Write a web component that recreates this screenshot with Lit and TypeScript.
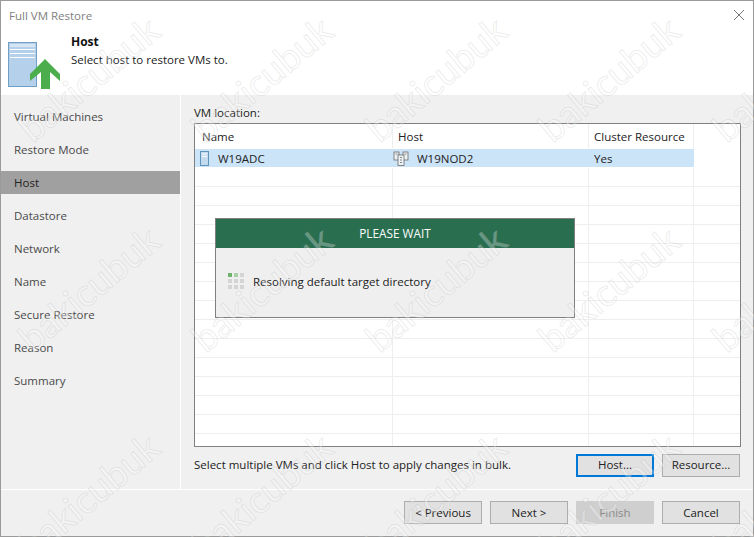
import { LitElement, html, css } from "lit";
import { customElement } from "lit/decorators.js";

const STEPS = ["Virtual Machines", "Restore Mode", "Host", "Datastore", "Network", "Name", "Secure Restore", "Reason", "Summary"];
const MARKS: [number, number][] = [];
for (const y of [78, 288, 495]) {
  for (let i = 1; i < 6; i++) MARKS.push([-86 + i * 173.5, y]);
}

@customElement("app-root")
export class AppRoot extends LitElement {
  static styles = css`
    :host { display: block; width: 754px; height: 537px; position: relative; overflow: hidden; background: #fff;
      font-family: "Open Sans", "Noto Sans", sans-serif; font-size: 11.5px; color: #222; }
    .window { box-sizing: border-box; height: 537px; border: 1px solid #9a9a9a; display: flex; flex-direction: column; }
    .title { height: 28px; display: flex; align-items: center; justify-content: space-between; padding: 0 6px 0 8px; color: #808080; font-size: 11.5px; flex: none; }
    .close { width: 12px; height: 12px; margin-right: 2px; margin-top: -1px; }
    .banner { height: 66px; flex: none; display: flex; background: #fff; }
    .banner-icon { width: 70px; padding: 13px 0 0 6px; box-sizing: border-box; flex: none; }
    .banner-icon svg { display: block; }
    .banner-text { padding-top: 4px; line-height: 18px; }
    .banner-text b { display: block; font-weight: 700; color: #111; font-size: 12px; }
    .main { flex: 1; display: flex; background: #f0f0f0; min-height: 0; }
    .side { width: 179px; flex: none; border-right: 1px solid #fff; padding-top: 10px; }
    .step { height: 23px; margin-bottom: 10px; display: flex; align-items: center; padding-left: 13px; color: #4a4a4a; }
    .step.on { background: #a0a0a0; color: #222; }
    .content { flex: 1; padding: 10px 12px 0 13px; display: flex; flex-direction: column; min-width: 0; }
    .label { height: 18px; line-height: 16px; }
    .table { position: relative; height: 324px; box-sizing: border-box; border: 1px solid #808080; background: #fff; overflow: hidden; flex: none; }
    .rows { display: flex; flex-direction: column; }
    .row { display: grid; grid-template-columns: 198px 196px 105px; height: 19px; box-sizing: border-box; border-bottom: 1px solid #eeeeee; }
    .row > div { border-right: 1px solid #eeeeee; display: flex; align-items: center; box-sizing: border-box; padding-left: 7px; }
    .row.head { height: 25px; padding-bottom: 1px; border-bottom: none; }
    .row.head > div:nth-child(2) { padding-left: 5px; }
    .row.head > div:nth-child(3) { padding-left: 5px; }
    .row.sel { height: 18px; border-bottom: none; margin-bottom: 1px; }
    .row.sel > div { background: #cce4f8; border-right-color: #cce4f8; color: #222; }
    .row.sel .c1 { padding-left: 5px; gap: 7px; }
    .row.sel .c2 { padding-left: 0; gap: 8px; }
    .row.sel .c3 { padding-left: 5px; }
    .dialog { position: absolute; left: 20px; top: 94px; width: 360px; height: 100px; box-sizing: border-box; border: 1px solid #808080; background: #efefef; display: flex; flex-direction: column; }
    .dialog-head { height: 29px; padding-bottom: 2px; box-sizing: border-box; background: #2a6e50; color: #fff; display: flex; align-items: center; justify-content: center; flex: none; font-size: 11.8px; }
    .dialog-body { flex: 1; display: flex; align-items: center; gap: 9px; padding: 0 12px 2px; }
    .spin { display: grid; grid-template-columns: repeat(3, 4px); grid-auto-rows: 4px; gap: 2px; margin-top: -1px; }
    .spin i { background: #d4d4d4; }
    .spin i.g { background: #6db36d; }
    .spin i.g2 { background: #a9cfa9; }
    .bulk { flex: 1; display: flex; align-items: center; justify-content: space-between; min-height: 0; padding-top: 7px; padding-bottom: 13px; }
    .bulk span { margin-bottom: 1px; }
    .btns { display: flex; gap: 8px; margin-right: 1px; }
    button { width: 78px; height: 23px; box-sizing: border-box; border: 1px solid #adadad; background: #e1e1e1; font: inherit; color: #222; padding: 0 0 1px; }
    button.focus { border: 2px solid #0078d7; }
    button:disabled { background: #cfcfcf; border-color: #cfcfcf; color: #8a8a8a; }
    .foot { height: 47px; flex: none; box-sizing: border-box; border-top: 1px solid #fff; background: #f0f0f0; display: flex; justify-content: flex-end; align-items: flex-start; padding: 11px 13px 0 0; gap: 8px; }
    .marks { position: absolute; inset: 0; pointer-events: none; }
    .mark { position: absolute; font-family: "Lato", "Open Sans", sans-serif; font-size: 38px; line-height: 1; white-space: nowrap; color: rgba(255,255,255,.30);
      -webkit-text-stroke: 1px rgba(170,170,170,.22); transform: translate(-50%,-50%) rotate(-40deg); }
  `;

  render() {
    return html`
      <div class="window">
        <div class="title"><span>Full VM Restore</span>
          <svg class="close" viewBox="0 0 12 12"><path d="M1 1l10 10M11 1L1 11" stroke="#777" stroke-width="1" fill="none"/></svg>
        </div>
        <div class="banner">
          <div class="banner-icon">
            <svg width="54" height="47" viewBox="0 0 54 47">
              <rect x="1.5" y="0.5" width="28" height="44" fill="#b5d0ea" stroke="#6f9fc4"/>
              <rect x="3" y="2" width="25" height="3" fill="#d6e5f3"/>
              <path d="M3 7.5h25M3 11.5h25M3 15.5h25" stroke="#fff" stroke-width="1.2"/>
              <path d="M38 17L53 32v7l-10-9v17H34V30L23 39v-7z" fill="#4cad4c"/>
            </svg>
          </div>
          <div class="banner-text"><b>Host</b>Select host to restore VMs to.</div>
        </div>
        <div class="main">
          <div class="side">
            ${STEPS.map((s) => html`<div class="step ${s === "Host" ? "on" : ""}">${s}</div>`)}
          </div>
          <div class="content">
            <div class="label">VM location:</div>
            <div class="table">
              <div class="rows">
                <div class="row head"><div>Name</div><div>Host</div><div>Cluster Resource</div></div>
                <div class="row sel">
                  <div class="c1">
                    <svg width="11" height="15" viewBox="0 0 11 15"><rect x=".5" y=".5" width="8" height="14" fill="#c4dbef" stroke="#5f94bb"/><path d="M2 3h5M2 5.500h5" stroke="#fff"/></svg>
                    W19ADC
                  </div>
                  <div class="c2">
                    <svg width="16" height="15" viewBox="0 0 16 15" fill="#eef3f6" stroke="#6a6a6a" stroke-width=".8"><rect x="1" y="1" width="5" height="8"/><rect x="10" y="1" width="5" height="8"/><rect x="5" y="4" width="6" height="10.500"/><path d="M7 6.500h2M7 9h2M7 11.500h2M2.500 3h2M11.500 3h2" fill="none"/></svg>
                    W19NOD2
                  </div>
                  <div class="c3">Yes</div>
                </div>
                ${Array.from({ length: 15 }, () => html`<div class="row"><div></div><div></div><div></div></div>`)}
              </div>
              <div class="dialog">
                <div class="dialog-head">PLEASE WAIT</div>
                <div class="dialog-body">
                  <div class="spin"><i class="g"></i><i class="g2"></i><i></i><i></i><i></i><i></i><i></i><i></i><i></i></div>
                  <span>Resolving default target directory</span>
                </div>
              </div>
            </div>
            <div class="bulk">
              <span>Select multiple VMs and click Host to apply changes in bulk.</span>
              <div class="btns"><button class="focus">Host...</button><button>Resource...</button></div>
            </div>
          </div>
        </div>
        <div class="foot">
          <button>&lt; Previous</button><button>Next &gt;</button><button disabled>Finish</button><button>Cancel</button>
        </div>
      </div>
      <div class="marks" aria-hidden="true">
        ${MARKS.map(([x, y]) => html`<span class="mark" style="left:${x}px;top:${y}px">bakicubuk</span>`)}
      </div>
    `;
  }
}
